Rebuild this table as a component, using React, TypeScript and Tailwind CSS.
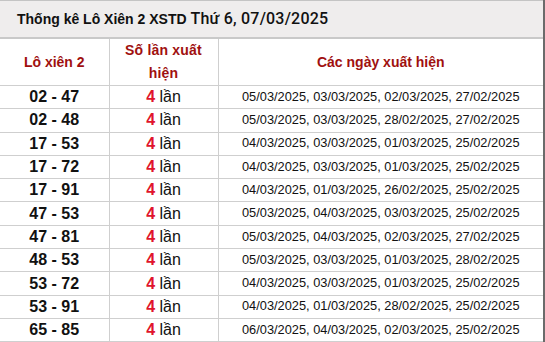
import React from 'react';

const rows: [string, string][] = [
  ['02 - 47', '05/03/2025, 03/03/2025, 02/03/2025, 27/02/2025'],
  ['02 - 48', '05/03/2025, 03/03/2025, 28/02/2025, 27/02/2025'],
  ['17 - 53', '04/03/2025, 03/03/2025, 01/03/2025, 25/02/2025'],
  ['17 - 72', '04/03/2025, 03/03/2025, 01/03/2025, 25/02/2025'],
  ['17 - 91', '04/03/2025, 01/03/2025, 26/02/2025, 25/02/2025'],
  ['47 - 53', '05/03/2025, 04/03/2025, 03/03/2025, 25/02/2025'],
  ['47 - 81', '05/03/2025, 04/03/2025, 02/03/2025, 27/02/2025'],
  ['48 - 53', '05/03/2025, 03/03/2025, 01/03/2025, 28/02/2025'],
  ['53 - 72', '04/03/2025, 03/03/2025, 01/03/2025, 25/02/2025'],
  ['53 - 91', '04/03/2025, 01/03/2025, 28/02/2025, 25/02/2025'],
  ['65 - 85', '06/03/2025, 04/03/2025, 02/03/2025, 25/02/2025'],
];

export default function App() {
  return (
    <div
      className="w-[545px] h-[342px] overflow-hidden bg-white border-r-2 border-[#6b6b6b]"
      style={{ fontFamily: '"Liberation Sans", Arial, sans-serif' }}
    >
      <div className="h-[39px] bg-[#efeded] border-t border-b-2 border-t-[#c4c4c4] border-b-[#c9c9c9] flex items-center pl-[17px] text-[#111]">
        <span className="font-bold text-[14px]">Thống kê Lô Xiên 2 XSTD</span>
        <span
          className="ml-[4px] font-medium text-[16px] tracking-[0.2px]"
          style={{ fontFamily: 'Roboto, "Liberation Sans", sans-serif' }}
        >
          Thứ 6, 07/03/2025
        </span>
      </div>
      <table className="w-full border-collapse table-fixed">
        <colgroup>
          <col className="w-[109px]" />
          <col className="w-[109px]" />
          <col />
        </colgroup>
        <thead>
          <tr className="h-[45px]">
            <th className="border-r border-b border-[#cfcfcf] text-[14px] font-bold text-[#a0100f] leading-[23px] align-middle">
              Lô xiên 2
            </th>
            <th className="border-r border-b border-[#cfcfcf] text-[14px] font-bold text-[#a0100f] leading-[23px] px-[6px] align-middle tracking-[0.2px]">
              Số lần xuất hiện
            </th>
            <th className="border-b border-[#cfcfcf] text-[14px] font-bold text-[#a0100f] leading-[23px] align-middle">
              Các ngày xuất hiện
            </th>
          </tr>
        </thead>
        <tbody>
          {rows.map(([pair, dates]) => (
            <tr key={pair} className="h-[23.3px]">
              <td className="border-r border-b border-[#cfcfcf] text-center text-[16px] font-bold text-[#111] leading-none p-0">
                {pair}
              </td>
              <td className="border-r border-b border-[#cfcfcf] text-center text-[16px] text-[#111] leading-none p-0">
                <span className="font-bold text-[#e0142c]">4</span> lần
              </td>
              <td className="border-b border-[#cfcfcf] text-center text-[12.8px] text-[#111] leading-none p-0 whitespace-nowrap">
                {dates}
              </td>
            </tr>
          ))}
        </tbody>
      </table>
    </div>
  );
}
